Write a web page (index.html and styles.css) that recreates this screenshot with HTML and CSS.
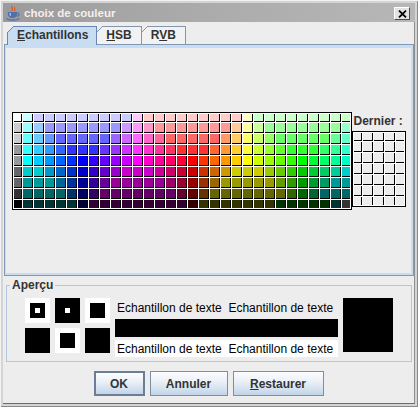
FILE: index.html
```html
<!DOCTYPE html>
<html lang="fr">
<head>
<meta charset="utf-8">
<title>choix de couleur</title>
<link rel="stylesheet" href="styles.css">
</head>
<body>
<div class="window">
  <div class="titlebar">
    <svg class="app-icon" width="16" height="16" viewBox="0 0 16 16">
      <path d="M7.2 1 C5.4 2.6 8.8 3.6 7 5.8" fill="none" stroke="#e2571e" stroke-width="1.3"/>
      <path d="M9.8 1.8 C8.4 3.2 11.2 4.2 9.6 6.2" fill="none" stroke="#e2571e" stroke-width="1.1"/>
      <path d="M2.8 7 H12 V9 C12 11.8 10 13 7.4 13 C4.8 13 2.8 11.8 2.8 9 Z" fill="#4f6fb0"/>
      <path d="M4 8 H6 V11 H5 Z" fill="#9fb6e4"/>
      <path d="M12 7.8 C14.8 7.8 14.8 11.2 11.4 11.2" fill="none" stroke="#4f6fb0" stroke-width="1.2"/>
      <path d="M1.2 13.4 C4 15.6 11.4 15.6 14.4 13.4" fill="none" stroke="#4f6fb0" stroke-width="1.3"/>
    </svg>
    <span class="title">choix de couleur</span>
    <div class="close-btn">
      <svg width="9" height="8" viewBox="0 0 9 8"><path d="M1 0.6 L8 7.4 M8 0.6 L1 7.4" stroke="#000" stroke-width="1.8"/></svg>
    </div>
  </div>
  <div class="client">
    <div class="tabpane">
      <div class="tabrow">
        <div class="tab selected"><u>E</u>chantillons</div>
        <div class="tab second"><u>H</u>SB</div>
        <div class="tab third">R<u>V</u>B</div>
      </div>
      <div class="tab-content">
        <div class="tab-inner">
          <div class="swatches main" id="main-swatches"></div>
          <div class="recent-col">
            <div class="recent-label">Dernier :</div>
            <div class="swatches recent" id="recent-swatches"></div>
          </div>
        </div>
      </div>
    </div>
    <fieldset class="preview">
      <legend>Aperçu</legend>
      <div class="preview-body">
        <div class="squares">
          <div class="sq white"><div class="sq-in black"><div class="sq-c white"></div></div></div>
          <div class="sq black"><div class="sq-c white"></div></div>
          <div class="sq white"><div class="sq-in black"></div></div>
          <div class="sq black"></div>
          <div class="sq white"><div class="sq-in black"></div></div>
          <div class="sq black"></div>
        </div>
        <div class="samples">
          <div class="sample-row">Echantillon de texte  Echantillon de texte</div>
          <div class="sample-bar"></div>
          <div class="sample-row on-white">Echantillon de texte  Echantillon de texte</div>
        </div>
        <div class="big-swatch"></div>
      </div>
    </fieldset>
    <div class="buttons">
      <button class="btn default">OK</button>
      <button class="btn cancel">Annuler</button>
      <button class="btn reset"><u>R</u>estaurer</button>
    </div>
  </div>
</div>
<script src="script.js"></script>
</body>
</html>
```

FILE: styles.css
```css
* { box-sizing: border-box; }
html, body { margin: 0; padding: 0; }
body {
  width: 418px;
  height: 407px;
  overflow: hidden;
  background: #d6d6d6;
  font-family: "Liberation Sans", Arial, sans-serif;
  color: #333333;
}

.window {
  width: 418px;
  height: 407px;
  padding: 3px;
  background: #d4d4d4;
  box-shadow: inset 1px 1px 0 #f2f2f2, inset -1px -1px 0 #8a8a8a;
}

.titlebar {
  height: 19px;
  display: flex;
  align-items: center;
  background: linear-gradient(to right, #9b9b9b, #a9a9a9 40%, #b7b7b7);
}
.app-icon { margin-left: 2px; flex: none; }
.title {
  margin-left: 3px;
  font-size: 11.5px;
  font-weight: bold;
  color: #f7eded;
  white-space: nowrap;
}
.close-btn {
  margin-left: auto;
  margin-right: 5px;
  align-self: flex-start;
  margin-top: 4px;
  width: 16px;
  height: 13px;
  background: #e2e2e2;
  border: 1px solid;
  border-color: #ffffff #4a4a4a #4a4a4a #ffffff;
  display: flex;
  align-items: center;
  justify-content: center;
}

.client {
  height: 382px;
  background: #eeeded;
  border-right: 1px solid #8e8e8e;
  border-bottom: 1px solid #6c6c6c;
  display: flex;
  flex-direction: column;
}

/* Tabs */
.tabpane { margin: 4px 0 0 1px; }
.tabrow {
  display: flex;
  align-items: flex-end;
  height: 18px;
  padding-left: 3px;
}
.tab {
  position: relative;
  height: 18px;
  padding: 0 9px 0 9px;
  border: 1px solid #8396ad;
  border-bottom: none;
  background: #f2f2f2;
  font-size: 12px;
  font-weight: bold;
  line-height: 17px;
  color: #333333;
  white-space: nowrap;
}
.tab u { text-underline-offset: 1px; }
.tab::before {
  content: "";
  position: absolute;
  top: -1px;
  left: -1px;
  width: 7px;
  height: 7px;
  background: linear-gradient(135deg, #eeeded 0, #eeeded calc(50% - 0.6px), #8396ad calc(50% - 0.6px), #8396ad calc(50% + 0.6px), transparent calc(50% + 0.6px));
}
.tab.selected {
  z-index: 3;
  height: 19px;
  margin-bottom: -1px;
  padding-right: 8px;
  background: #c8ddf2;
  border-color: #6a86b4;
}
.tab.selected::before {
  background: linear-gradient(135deg, #eeeded 0, #eeeded calc(50% - 0.6px), #6a86b4 calc(50% - 0.6px), #6a86b4 calc(50% + 0.6px), transparent calc(50% + 0.6px));
}
.tab.second { z-index: 2; margin-left: -1px; }
.tab.third { z-index: 1; margin-left: -1px; }

.tab-content {
  height: 232px;
  border: 1px solid #7f98b8;
}
.tab-inner {
  height: 100%;
  border-style: solid;
  border-color: #c8ddf2;
  border-width: 3px 2px 2px 1px;
  background: #eeeded;
  display: flex;
  align-items: center;
  justify-content: center;
}

/* Swatches */
.swatches {
  position: relative;
  display: grid;
  gap: 1px;
  background: #ffffff;
  grid-auto-rows: 10px;
}
.swatches.main { grid-template-columns: repeat(31, 10px); }
.swatches.recent { grid-template-columns: repeat(5, 10px); }
.swatches::after {
  content: "";
  position: absolute;
  inset: 0;
  border: 1px solid #000000;
  box-shadow: inset 0 0 0 1px #ffffff;
  pointer-events: none;
}
.cell { box-shadow: inset -1px -1px 0 #000000; }
.recent .cell { background: #eeeded; }

.recent-col {
  display: flex;
  flex-direction: column;
  width: 54px;
}
.recent-label {
  height: 15px;
  margin-bottom: 2px;
  padding-left: 2px;
  font-size: 12px;
  font-weight: bold;
  line-height: 15px;
  color: #333333;
  white-space: nowrap;
}

/* Preview */
.preview {
  margin: 2px 2px 0 3px;
  padding: 0 0 4px 0;
  border: 1px solid #b2c7df;
  min-width: 0;
}
.preview legend {
  margin-left: 3px;
  padding: 0 2px;
  font-size: 12px;
  font-weight: bold;
  line-height: 14px;
  color: #333333;
}
.preview-body {
  margin-top: 6px;
  display: flex;
  align-items: flex-start;
  justify-content: center;
  gap: 5px;
}
.squares {
  display: grid;
  grid-template-columns: repeat(3, 25px);
  grid-auto-rows: 25px;
  gap: 5px;
}
.sq, .sq-in {
  display: flex;
  align-items: center;
  justify-content: center;
}
.sq-in { width: 15px; height: 15px; }
.sq-c { width: 5px; height: 5px; }
.white { background: #ffffff; }
.black { background: #000000; }

.samples { width: 223px; }
.sample-row {
  height: 19px;
  padding: 2px 0 0 2px;
  font-size: 12px;
  line-height: 17px;
  color: #000000;
  white-space: pre;
}
.sample-bar {
  height: 18px;
  margin-top: 2px;
  background: #000000;
}
.sample-row.on-white {
  height: 17px;
  margin-top: 3px;
  padding-top: 2px;
  line-height: 15px;
  background: #ffffff;
}
.big-swatch {
  width: 50px;
  height: 54px;
  background: #000000;
}

/* Buttons */
.buttons {
  margin-top: 9px;
  display: flex;
  justify-content: center;
  gap: 5px;
}
.btn {
  height: 25px;
  margin: 0;
  padding: 0;
  border: 1px solid #7d8fa5;
  background: linear-gradient(to bottom, #fbfcfe 0%, #eef3f9 35%, #d7e3f0 70%, #c1d4e8 100%);
  font-family: "Liberation Sans", Arial, sans-serif;
  font-size: 12px;
  font-weight: bold;
  color: #333333;
}
.btn u { text-underline-offset: 1px; }
.btn.default { width: 51px; border: 2px solid #6b7e95; }
.btn.cancel { width: 78px; }
.btn.reset { width: 91px; }
```

FILE: script.js
```js
var rows = [
  "fff cff ccf*9 fcf fcc*9 ffc cfc*9",
  "ccc 9ff 9cf 99f*7 c9f f9f f9c f99*7 fc9 ff9 cf9 9f9*7 9fc",
  "ccc 6ff 6cf 69f 66f*5 96f c6f f6f f6c f69 f66*5 f96 fc6 ff6 cf6 9f6 6f6*5 6f9 6fc",
  "999 3ff 3cf 39f 36f 33f*3 63f 93f c3f f3f f3c f39 f36 f33*3 f63 f93 fc3 ff3 cf3 9f3 6f3 3f3*3 3f6 3f9 3fc",
  "999 0ff 0cf 09f 06f 03f 00f 30f 60f 90f c0f f0f f0c f09 f06 f03 f00 f30 f60 f90 fc0 ff0 cf0 9f0 6f0 3f0 0f0 0f3 0f6 0f9 0fc",
  "666 0cc 0cc 09c 06c 03c 00c 30c 60c 90c c0c c0c c0c c09 c06 c03 c00 c30 c60 c90 cc0 cc0 cc0 9c0 6c0 3c0 0c0 0c3 0c6 0c9 0cc",
  "666 099*3 069 039 009 309 609 909*5 906 903 900 930 960 990*5 690 390 090 093 096 099*2",
  "333 066*4 036 006 306 606*7 603 600 630 660*7 360 060 063 066*3",
  "000 033*5 003 303*9 300 330*7 030*5 033 333"
];

var main = document.getElementById("main-swatches");
rows.forEach(function (row) {
  row.split(" ").forEach(function (tok) {
    var parts = tok.split("*");
    var n = parts.length > 1 ? parseInt(parts[1], 10) : 1;
    for (var i = 0; i < n; i++) {
      var c = document.createElement("div");
      c.className = "cell";
      c.style.background = "#" + parts[0];
      main.appendChild(c);
    }
  });
});

var recent = document.getElementById("recent-swatches");
for (var k = 0; k < 35; k++) {
  var r = document.createElement("div");
  r.className = "cell";
  recent.appendChild(r);
}
```
